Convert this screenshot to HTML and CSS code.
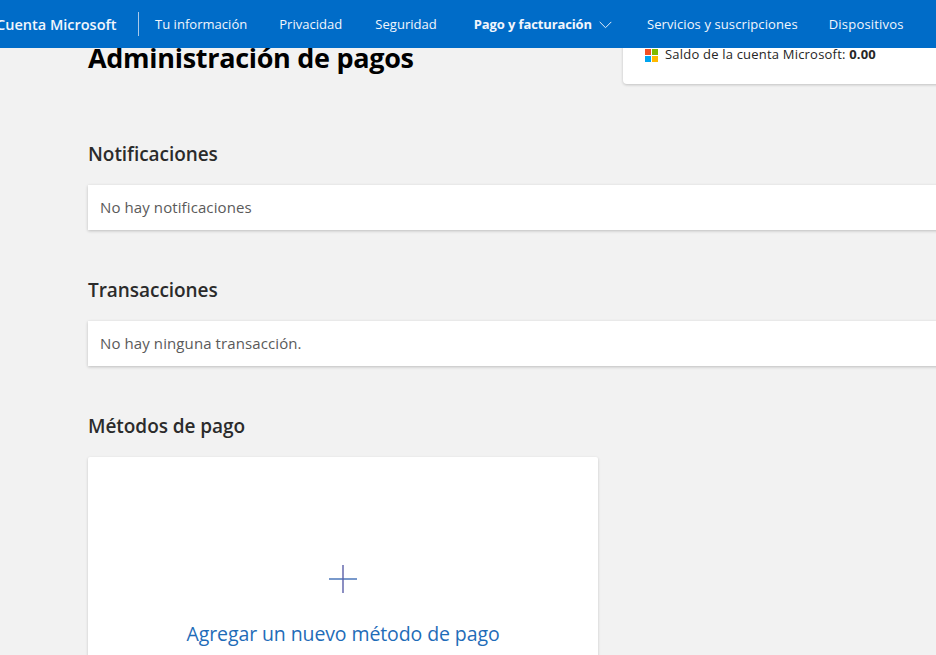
FILE: index.html
```html
<!DOCTYPE html>
<html lang="es">
<head>
<meta charset="utf-8">
<title>Administración de pagos</title>
<link rel="stylesheet" href="styles.css">
</head>
<body>
<header class="topbar">
  <a class="brand">Cuenta Microsoft</a>
  <nav class="nav">
    <a class="nav-item">Tu información</a>
    <a class="nav-item nav-privacy">Privacidad</a>
    <a class="nav-item nav-security">Seguridad</a>
    <a class="nav-item nav-active">Pago y facturación<svg class="chev" width="13" height="8" viewBox="0 0 13 8"><path d="M.7.9 6.5 6.7 12.3.9" fill="none" stroke="#e6effa" stroke-width="1"/></svg></a>
    <a class="nav-item nav-services">Servicios y suscripciones</a>
    <a class="nav-item nav-devices">Dispositivos</a>
  </nav>
</header>
<main class="page">
  <div class="title-row">
    <h1 class="title">Administración de pagos</h1>
    <aside class="balance">
      <svg class="ms-logo" width="13" height="13" viewBox="0 0 13 13"><rect width="6" height="6" fill="#f25022"/><rect x="7" width="6" height="6" fill="#7fba00"/><rect y="7" width="6" height="6" fill="#00a4ef"/><rect x="7" y="7" width="6" height="6" fill="#ffb900"/></svg>
      <span>Saldo de la cuenta Microsoft: <b class="amount">0.00</b></span>
    </aside>
  </div>
  <section class="section">
    <h2 class="heading">Notificaciones</h2>
    <div class="row-card">No hay notificaciones</div>
  </section>
  <section class="section">
    <h2 class="heading">Transacciones</h2>
    <div class="row-card">No hay ninguna transacción.</div>
  </section>
  <section class="section">
    <h2 class="heading">Métodos de pago</h2>
    <div class="add-card">
      <svg class="plus" width="28" height="28" viewBox="0 0 28 28"><path d="M0 14h28" stroke="#3f6db5" stroke-width="1.4"/><path d="M14 0v28" stroke="#5b5fa8" stroke-width="1.4"/></svg>
      <a class="add-link">Agregar un nuevo método de pago</a>
    </div>
  </section>
</main>
</body>
</html>
```
FILE: styles.css
```css
* { box-sizing: border-box; }
html, body { margin: 0; height: 100%; overflow: hidden; }
body {
  background: #f2f2f2;
  color: #262626;
  font-family: "Open Sans", "Noto Sans", "Liberation Sans", sans-serif;
}
.topbar {
  position: absolute;
  top: 0; left: 0; right: 0;
  height: 48px;
  background: #006cc8;
  color: #f2f6fc;
  display: flex;
  align-items: center;
  white-space: nowrap;
  overflow: hidden;
  z-index: 2;
}
.brand {
  margin-left: -4px;
  font-size: 14.5px;
  font-weight: 600;
  letter-spacing: 0;
  width: 142px;
  flex: none;
}
.nav {
  display: flex;
  align-items: center;
  height: 24px;
  border-left: 1px solid #a9c9ea;
  padding-left: 16px;
}
.nav-item {
  font-size: 13px;
  letter-spacing: .03px;
  margin-right: 32px;
}
.nav-privacy { margin-right: 33px; }
.nav-security { margin-right: 37px; }
.nav-active { font-weight: 700; letter-spacing: -.12px; margin-right: 35px; }
.nav-services { letter-spacing: .1px; margin-right: 31px; }
.nav-devices { letter-spacing: .2px; }
.chev { margin-left: 7px; }
.page { padding: 0 0 0 88px; width: 1100px; }
.title-row { display: flex; height: 84px; align-items: flex-start; }
.title {
  margin: 40px 0 0;
  width: 535px;
  font-size: 27px;
  line-height: 36px;
  font-weight: 700;
  color: #000;
  letter-spacing: -.3px;
}
.balance {
  width: 400px;
  height: 84px;
  padding: 46px 0 0 22px;
  background: #fff;
  border-radius: 4px;
  box-shadow: 0 1px 3px rgba(0,0,0,.2);
  display: flex;
  align-items: flex-start;
  gap: 7px;
  font-size: 13px;
  line-height: 17px;
  letter-spacing: .2px;
}
.ms-logo { margin-top: 3px; flex: none; }
.section { margin-top: 0; }
.heading {
  margin: 0;
  padding-top: 58px;
  height: 101px;
  font-size: 19px;
  line-height: 24px;
  font-weight: 600;
  letter-spacing: -.05px;
  color: #2b2b2b;
}
.row-card {
  height: 45px;
  padding-left: 12px;
  background: #fff;
  color: #5a5a5a;
  font-size: 15px;
  line-height: 45px;
  letter-spacing: .1px;
  box-shadow: 0 1px 3px rgba(0,0,0,.22);
}
.section + .section .heading { padding-top: 48px; height: 91px; }
.add-card {
  width: 510px;
  height: 300px;
  background: #fff;
  border-radius: 2px;
  box-shadow: 0 1px 3px rgba(0,0,0,.18);
  display: flex;
  flex-direction: column;
  align-items: center;
  padding-top: 108px;
}
.plus { flex: none; }
.add-link {
  margin-top: 28px;
  color: #1f6cb8;
  font-size: 19.5px;
  line-height: 26px;
  letter-spacing: -.1px;
  white-space: nowrap;
}
```
